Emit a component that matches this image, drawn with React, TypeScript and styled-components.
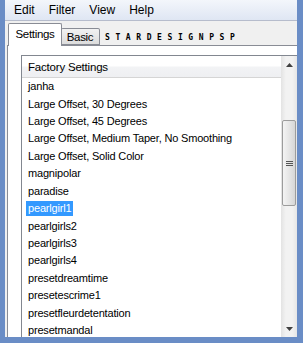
import React from "react";
import styled, { createGlobalStyle } from "styled-components";

const GlobalStyle = createGlobalStyle`
  html, body { margin: 0; padding: 0; background: #6a8dc6; }
  body { font-family: "Liberation Sans", Arial, sans-serif; }
`;

const Frame = styled.div`
  width: 303px;
  height: 343px;
  box-sizing: border-box;
  border-left: 5px solid #6a8dc6;
  border-right: 6px solid #6a8dc6;
  border-bottom: 6px solid #6a8dc6;
  background: #f0f0f0;
  display: flex;
  flex-direction: column;
  overflow: hidden;
`;

const MenuBar = styled.div`
  height: 20px;
  flex: none;
  display: flex;
  align-items: center;
  padding-left: 2px;
  background: linear-gradient(#f3f6fb, #dfe6f3);
  border-bottom: 1px solid #b6bccc;
`;

const MenuItem = styled.span`
  font-size: 12px;
  color: #000;
  padding: 0 7px;
`;

const TabStrip = styled.div`
  height: 24px;
  flex: none;
  display: flex;
  align-items: flex-end;
  padding-left: 3px;
`;

const Tab = styled.div<{ $active?: boolean }>`
  box-sizing: border-box;
  font-size: 11.5px;
  letter-spacing: -0.3px;
  color: #000;
  display: flex;
  align-items: center;
  justify-content: center;
  border: 1px solid #898c95;
  border-bottom: ${(p) => (p.$active ? "none" : "1px solid #898c95")};
  background: ${(p) => (p.$active ? "#ffffff" : "linear-gradient(#f2f2f2, #dcdcdc)")};
  height: ${(p) => (p.$active ? "23px" : "17px")};
  margin-bottom: ${(p) => (p.$active ? "-1px" : "0")};
  width: ${(p) => (p.$active ? "54px" : "39px")};
  padding-bottom: ${(p) => (p.$active ? "3px" : "0")};
  border-radius: 2px 2px 0 0;
  position: relative;
  z-index: ${(p) => (p.$active ? 2 : 1)};
  & + & { margin-left: -1px; border-left: none; }
`;

const Brand = styled.span`
  font-family: "DejaVu Sans Mono", "Liberation Mono", monospace;
  font-size: 8px;
  font-weight: bold;
  letter-spacing: 5.6px;
  color: #000;
  align-self: center;
  margin-top: 8px;
  margin-left: 5px;
`;

const Panel = styled.div`
  flex: 1;
  min-height: 0;
  margin-left: 2px;
  background: #ffffff;
  border-left: 1px solid #898c95;
  border-top: 1px solid #898c95;
  padding: 9px 0 0 13px;
  display: flex;
`;

const ListBox = styled.div`
  flex: 1;
  min-width: 0;
  display: flex;
  border-left: 1px solid #828790;
  border-top: 1px solid #828790;
  background: #fff;
`;

const ListContent = styled.div`
  flex: 1;
  min-width: 0;
  display: flex;
  flex-direction: column;
  overflow: hidden;
`;

const Header = styled.div`
  height: 22px;
  flex: none;
  box-sizing: border-box;
  display: flex;
  align-items: center;
  padding-left: 6px;
  font-size: 11.5px;
  letter-spacing: -0.2px;
  color: #000;
  background: linear-gradient(#ffffff 0%, #ffffff 45%, #f2f3f5 55%, #eeeff2 100%);
  border-bottom: 1px solid #d5d5d5;
`;

const Row = styled.div`
  height: 17.43px;
  flex: none;
  display: flex;
  align-items: center;
  padding-left: 4px;
  font-size: 11px;
  letter-spacing: -0.18px;
  color: #000;
  white-space: nowrap;
`;

const Label = styled.span<{ $selected?: boolean }>`
  padding: 0 2px;
  line-height: 15px;
  background: ${(p) => (p.$selected ? "#3399ff" : "transparent")};
  color: ${(p) => (p.$selected ? "#ffffff" : "#000")};
`;

const ScrollBar = styled.div`
  width: 16px;
  flex: none;
  display: flex;
  flex-direction: column;
  background: linear-gradient(90deg, #e3e3e3, #f2f2f2 30%, #f2f2f2 70%, #e6e6e6);
`;

const ArrowButton = styled.div`
  height: 17px;
  flex: none;
  display: flex;
  align-items: center;
  justify-content: center;
`;

const Track = styled.div<{ $grow: number }>`
  flex: ${(p) => p.$grow};
`;

const Thumb = styled.div`
  height: 86px;
  flex: none;
  box-sizing: border-box;
  margin: 0 1px;
  border: 1px solid #9c9c9c;
  border-radius: 2px;
  background: linear-gradient(90deg, #f4f4f4, #e6e6e6 50%, #d6d6d6);
  display: flex;
  align-items: center;
  justify-content: center;
`;

const items = [
  "janha",
  "Large Offset, 30 Degrees",
  "Large Offset, 45 Degrees",
  "Large Offset, Medium Taper, No Smoothing",
  "Large Offset, Solid Color",
  "magnipolar",
  "paradise",
  "pearlgirl1",
  "pearlgirls2",
  "pearlgirls3",
  "pearlgirls4",
  "presetdreamtime",
  "presetescrime1",
  "presetfleurdetentation",
  "presetmandal",
];

export default function App() {
  return (
    <>
      <GlobalStyle />
      <Frame>
        <MenuBar>
          <MenuItem>Edit</MenuItem>
          <MenuItem>Filter</MenuItem>
          <MenuItem>View</MenuItem>
          <MenuItem>Help</MenuItem>
        </MenuBar>
        <TabStrip>
          <Tab $active>Settings</Tab>
          <Tab>Basic</Tab>
          <Brand>STARDESIGNPSP</Brand>
        </TabStrip>
        <Panel>
          <ListBox>
            <ListContent>
              <Header>Factory Settings</Header>
              {items.map((it) => (
                <Row key={it}>
                  <Label $selected={it === "pearlgirl1"}>{it}</Label>
                </Row>
              ))}
            </ListContent>
            <ScrollBar>
              <ArrowButton>
                <svg width="7" height="4" viewBox="0 0 7 4">
                  <path d="M3.5 0 L7 4 L0 4 Z" fill="#404040" />
                </svg>
              </ArrowButton>
              <Track $grow={47} />
              <Thumb>
                <svg width="7" height="7" viewBox="0 0 7 7">
                  <path d="M0 1.5 H7 M0 3.5 H7 M0 5.5 H7" stroke="#555" strokeWidth="1" />
                </svg>
              </Thumb>
              <Track $grow={113} />
              <ArrowButton>
                <svg width="7" height="4" viewBox="0 0 7 4">
                  <path d="M0 0 L7 0 L3.5 4 Z" fill="#404040" />
                </svg>
              </ArrowButton>
            </ScrollBar>
          </ListBox>
        </Panel>
      </Frame>
    </>
  );
}
